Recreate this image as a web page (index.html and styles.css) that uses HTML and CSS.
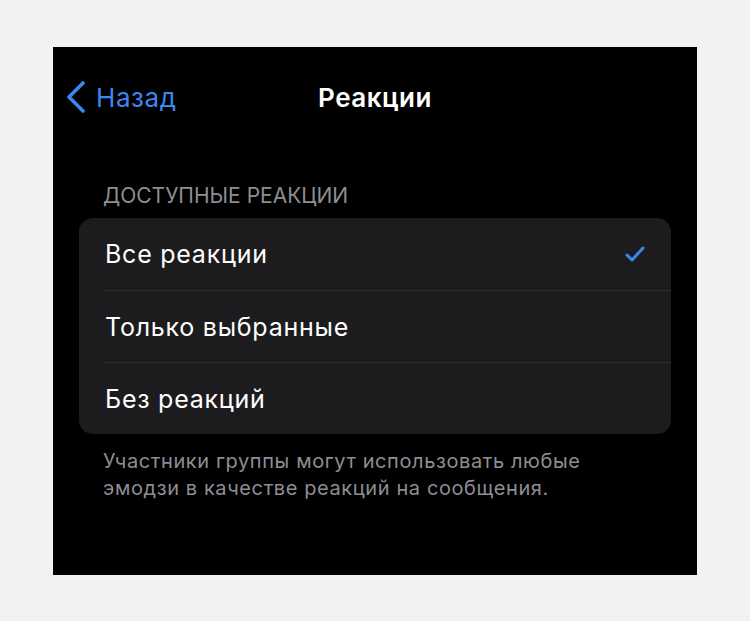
FILE: index.html
```html
<!DOCTYPE html>
<html lang="ru">
<head>
  <meta charset="UTF-8" />
  <meta name="viewport" content="width=device-width, initial-scale=1.0" />
  <title>Реакции</title>
  <link rel="stylesheet" href="styles.css">
</head>
<body>

  <div class="screen">
    <!-- верхняя панель -->
    <nav class="navbar">
      <a class="back" href="#">
        <svg class="chevron" width="22" height="32" viewBox="0 0 22 32">
          <path d="M18 2 L4 16 L18 30" fill="none" stroke="currentColor" stroke-width="3.6" stroke-linecap="round" stroke-linejoin="round" />
        </svg>
        <span>Назад</span>
      </a>
      <h1 class="title">Реакции</h1>
      <span></span>
    </nav>

    <section class="group">
      <h2 class="group-header">Доступные реакции</h2>
      <ul class="list">
        <li class="row">
          <span>Все реакции</span>
          <svg class="check" width="20" height="16" viewBox="0 0 20 16">
            <path d="M2 9 L7 14 L18 2" fill="none" stroke="currentColor" stroke-width="3" stroke-linecap="round" stroke-linejoin="round" />
          </svg>
        </li>
        <li class="row"><span>Только выбранные</span></li>
        <li class="row"><span>Без реакций</span></li>
      </ul>
      <p class="group-footer">Участники группы могут использовать любые<br>эмодзи в качестве реакций на сообщения.</p>
    </section>
  </div>

</body>
</html>
```

FILE: styles.css
```css
:root {
  --blue: #3d86ee;
  --cell: #1c1c1e;
  --separator: #2e2e31;
  --secondary: #8d8d93;
}

* {
  margin: 0;
  padding: 0;
  box-sizing: border-box;
  font-family: 'Inter', 'Noto Sans', sans-serif;
}

body {
  background-color: #f2f2f2;
}

.screen {
  width: 644px;
  height: 528px;
  margin: 47px 0 0 53px;
  padding-top: 25px;
  background-color: #000;
  color: #fff;
}

.navbar {
  display: grid;
  grid-template-columns: 1fr auto 1fr;
  align-items: center;
  height: 50px;
  padding: 0 12px;
}

.back {
  display: flex;
  align-items: center;
  gap: 9px;
  color: var(--blue);
  text-decoration: none;
  font-size: 26px;
  letter-spacing: 0.6px;
}

.chevron {
  display: block;
}

.title {
  font-size: 26px;
  font-weight: 600;
  letter-spacing: 0.5px;
}

.group {
  padding: 60px 26px 0;
}

.group-header {
  padding-left: 24px;
  font-size: 21px;
  font-weight: 400;
  text-transform: uppercase;
  color: var(--secondary);
  line-height: 28px;
}

.list {
  list-style: none;
  margin-top: 8px;
  background-color: var(--cell);
  border-radius: 14px;
  overflow: hidden;
}

.row {
  display: flex;
  align-items: center;
  justify-content: space-between;
  height: 72px;
  margin-left: 26px;
  padding-right: 26px;
  font-size: 25px;
  letter-spacing: 0.75px;
  border-top: 1px solid var(--separator);
}

.row:first-child {
  border-top: none;
}

.check {
  color: var(--blue);
}

.group-footer {
  padding: 14px 24px 0;
  font-size: 20px;
  line-height: 27px;
  letter-spacing: 0.6px;
  color: var(--secondary);
}
```
